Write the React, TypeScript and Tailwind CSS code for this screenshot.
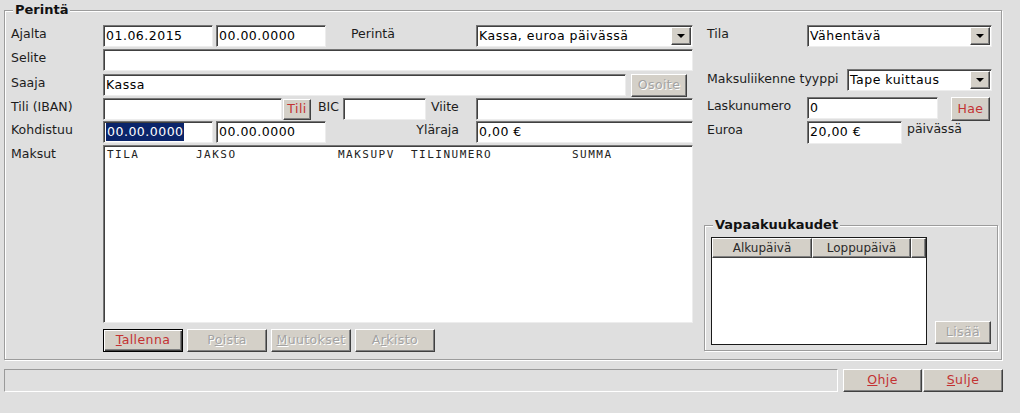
import type { ReactNode } from 'react';

const sunken =
  'bg-white border border-t-[#767676] border-l-[#767676] border-r-[#ededed] border-b-[#ededed] shadow-[inset_1px_1px_0_#404040]';
const raised =
  'bg-[#d4d0c8] border border-t-white border-l-white border-r-[#404040] border-b-[#404040] shadow-[inset_-1px_-1px_0_#808080]';

function Label({ children, className = 'w-[92px]' }: { children: ReactNode; className?: string }) {
  return <div className={`${className} shrink-0 self-start leading-[18px] whitespace-nowrap`}>{children}</div>;
}

function Field({ className, children }: { className: string; children?: ReactNode }) {
  return (
    <div
      className={`${className} ${sunken} shrink-0 flex items-center pl-[2px] overflow-hidden whitespace-nowrap text-[12.5px] tracking-[0.5px] text-black`}
    >
      {children}
    </div>
  );
}

function Select({ className, value }: { className: string; value: string }) {
  return (
    <div className={`${className} ${sunken} h-[22px] shrink-0 flex items-center justify-between pl-[2px] pr-[1px]`}>
      <span className="whitespace-nowrap text-[12.5px] tracking-[0.5px] text-black">{value}</span>
      <div className={`${raised} w-[20px] h-[18px] flex items-center justify-center`}>
        <svg width="8" height="4" viewBox="0 0 8 4" aria-hidden>
          <path d="M0 0h8L4 4z" fill="#000" />
        </svg>
      </div>
    </div>
  );
}

function Btn({
  className,
  children,
  disabled,
  isDefault,
}: {
  className: string;
  children: ReactNode;
  disabled?: boolean;
  isDefault?: boolean;
}) {
  const look = isDefault
    ? 'bg-[#d4d0c8] border border-black shadow-[inset_1px_1px_0_#fff,inset_-1px_-1px_0_#404040,inset_-2px_-2px_0_#808080]'
    : raised;
  const text = disabled ? 'text-[#a3a3a3] [text-shadow:1px_1px_0_#fff]' : 'text-[#c33232]';
  return (
    <div
      className={`${className} ${look} ${text} shrink-0 flex items-center justify-center whitespace-nowrap text-[12.5px] tracking-[0.4px]`}
    >
      {children}
    </div>
  );
}

function Group({ title, className, children }: { title: string; className: string; children: ReactNode }) {
  return (
    <fieldset className={`${className} border border-[#9c9c9c] shadow-[inset_1px_1px_0_#fff,1px_1px_0_#fff]`}>
      <legend className="ml-[8px] px-[2px] bg-[#dfdfdf] font-bold text-[13px] leading-[20px] text-[#111]">
        {title}
      </legend>
      {children}
    </fieldset>
  );
}

export default function App() {
  return (
    <div className="w-[1020px] h-[413px] bg-[#dfdfdf] overflow-hidden text-[12.5px] text-[#1c1c1c] font-['DejaVu_Sans',Verdana,sans-serif]">
      <Group title="Perintä" className="ml-[4px] w-[998px] h-[360px]">
        <div className="flex pl-[6px] pt-[5px]">
          {/* vasen sarake */}
          <div className="w-[682px] shrink-0 flex flex-col">
            <div className="flex items-center h-[22px]">
              <Label>Ajalta</Label>
              <Field className="w-[110px] h-[22px]">01.06.2015</Field>
              <Field className="ml-[3px] w-[110px] h-[22px]">00.00.0000</Field>
              <Label className="ml-[25px] w-[125px]">Perintä</Label>
              <Select className="w-[217px]" value="Kassa, euroa päivässä" />
            </div>

            <div className="mt-[2px] flex items-center h-[22px]">
              <Label>Selite</Label>
              <Field className="w-[590px] h-[22px]" />
            </div>

            <div className="mt-[3px] flex items-start h-[23px]">
              <Label>Saaja</Label>
              <Field className="w-[523px] h-[22px]">Kassa</Field>
              <Btn className="ml-[5px] w-[56px] h-[23px]" disabled>
                Osoite
              </Btn>
            </div>

            <div className="mt-[1px] flex items-center h-[22px]">
              <Label>Tili (IBAN)</Label>
              <Field className="w-[179px] h-[22px]" />
              <Btn className="ml-[1px] w-[28px] h-[21px] mt-[1px]">Tili</Btn>
              <Label className="ml-[7px] w-[25px]">BIC</Label>
              <Field className="w-[83px] h-[22px]" />
              <Label className="pl-[5px] w-[50px]">Viite</Label>
              <Field className="w-[217px] h-[22px]" />
            </div>

            <div className="mt-[1px] flex items-center h-[22px]">
              <Label>Kohdistuu</Label>
              <Field className="w-[110px] h-[22px]">
                <span className="bg-[#0a246a] text-white leading-[18px] pl-[1px]">00.00.0000</span>
              </Field>
              <Field className="ml-[3px] w-[110px] h-[22px]">00.00.0000</Field>
              <Label className="w-[150px] text-right pr-[17px]">Yläraja</Label>
              <Field className="w-[217px] h-[22px]">0,00 €</Field>
            </div>

            <div className="mt-[2px] flex">
              <Label>Maksut</Label>
              <div className={`${sunken} w-[590px] h-[178px] pl-[3px] pt-[2px]`}>
                <div className="flex font-['DejaVu_Sans_Mono',monospace] text-[11px] tracking-[1.5px] leading-[14px] text-[#222]">
                  <span className="w-[89px] shrink-0">TILA</span>
                  <span className="w-[142px] shrink-0">JAKSO</span>
                  <span className="w-[73px] shrink-0">MAKSUPV</span>
                  <span className="w-[161px] shrink-0">TILINUMERO</span>
                  <span>SUMMA</span>
                </div>
              </div>
            </div>

            <div className="mt-[6px] flex pl-[92px]">
              <Btn className="w-[80px] h-[23px]" isDefault>
                <span>
                  <u>T</u>allenna
                </span>
              </Btn>
              <Btn className="ml-[4px] w-[80px] h-[23px]" disabled>
                <span>
                  P<u>o</u>ista
                </span>
              </Btn>
              <Btn className="ml-[4px] w-[80px] h-[23px]" disabled>
                <span>
                  <u>M</u>uutokset
                </span>
              </Btn>
              <Btn className="ml-[4px] w-[80px] h-[23px]" disabled>
                <span>
                  A<u>r</u>kisto
                </span>
              </Btn>
            </div>
          </div>

          {/* oikea sarake */}
          <div className="ml-[11px] w-[294px] shrink-0 flex flex-col">
            <div className="flex items-center h-[22px] pl-[3px]">
              <Label className="w-[100px]">Tila</Label>
              <Select className="w-[185px]" value="Vähentävä" />
            </div>

            <div className="mt-[22px] flex items-center h-[22px] pl-[3px]">
              <Label className="w-[140px] pt-[1px]">Maksuliikenne tyyppi</Label>
              <Select className="w-[145px]" value="Tape kuittaus" />
            </div>

            <div className="mt-[6px] flex items-start h-[24px] pl-[3px]">
              <Label className="w-[100px]">Laskunumero</Label>
              <Field className="w-[131px] h-[22px]">0</Field>
              <Btn className="ml-[13px] w-[39px] h-[24px]">Hae</Btn>
            </div>

            <div className="flex items-start h-[23px] pl-[3px]">
              <Label className="w-[100px]">Euroa</Label>
              <Field className="w-[95px] h-[23px]">20,00 €</Field>
              <div className="ml-[5px] leading-[15px]">päivässä</div>
            </div>

            <Group title="Vapaakuukaudet" className="mt-[71px] w-[294px] h-[136px]">
              <div className="flex items-end pl-[6px] pt-[2px]">
                <div className="w-[216px] h-[108px] border border-[#1a1a1a] bg-white flex flex-col">
                  <div className="flex h-[20px] text-[12px] text-[#2a2a2a]">
                    <div className={`${raised} w-[100px] flex items-center justify-center`}>Alkupäivä</div>
                    <div className={`${raised} w-[99px] flex items-center justify-center`}>Loppupäivä</div>
                    <div className={`${raised} flex-1`} />
                  </div>
                </div>
                <Btn className="ml-[8px] mb-[1px] w-[56px] h-[23px]" disabled>
                  Lisää
                </Btn>
              </div>
            </Group>
          </div>
        </div>
      </Group>

      <div className="mt-[9px] flex">
        <div className="ml-[4px] w-[834px] h-[23px] border border-t-[#9a9a9a] border-l-[#9a9a9a] border-r-white border-b-white" />
        <Btn className="ml-[5px] w-[79px] h-[23px]">
          <span>
            <u>O</u>hje
          </span>
        </Btn>
        <Btn className="ml-[1px] w-[80px] h-[23px]">
          <span>
            <u>S</u>ulje
          </span>
        </Btn>
      </div>
    </div>
  );
}
